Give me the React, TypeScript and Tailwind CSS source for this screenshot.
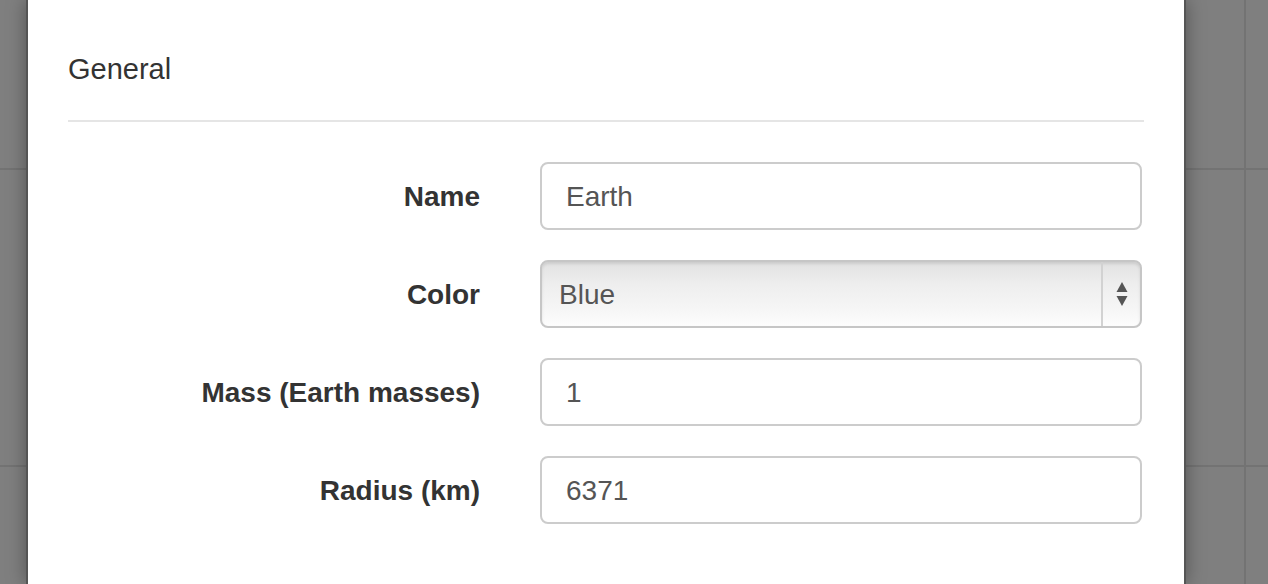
import React from "react";

const fields = [
  { label: "Name", value: "Earth" },
  { label: "Color", value: "Blue", select: true },
  { label: "Mass (Earth masses)", value: "1" },
  { label: "Radius (km)", value: "6371" },
];

const GridRows = () => (
  <div className="flex flex-col">
    <div className="h-[170px] border-b-2 border-[#737373]" />
    <div className="h-[297px] border-b-2 border-[#737373]" />
  </div>
);

const SelectBox = ({ value }: { value: string }) => (
  <div className="flex h-[68px] items-stretch rounded-[8px] border-2 border-[#c6c6c6] bg-[linear-gradient(to_bottom,#e2e2e2,#eeeeee_35%,#f6f6f6_75%,#fdfdfd)] shadow-[inset_0_2px_3px_rgba(0,0,0,0.1)]">
    <div className="flex flex-1 items-center pl-[17px] pt-[2px] text-[28px] text-[#555]">
      {value}
    </div>
    <div className="w-[2px] bg-[#d2d2d2]" />
    <div className="flex w-[37px] items-center justify-center">
      <svg width="12" height="26" viewBox="0 0 12 26">
        <polygon points="6,1 11.5,11 0.5,11" fill="#555" />
        <polygon points="0.5,15 11.5,15 6,25" fill="#555" />
      </svg>
    </div>
  </div>
);

export default function App() {
  return (
    <div className="flex h-[584px] w-full overflow-hidden bg-[#7f7f7f] font-['Liberation_Sans',Arial,sans-serif]">
      <div className="w-[26px] shrink-0">
        <GridRows />
      </div>

      <div className="relative z-10 w-[1160px] shrink-0 border-x-2 border-[#555] bg-white px-[40px] shadow-[0_0_18px_rgba(0,0,0,0.35)]">
        <div className="border-b-2 border-[#e5e5e5] pb-[31px] pt-[49px] text-[29px] leading-[40px] text-[#333]">
          General
        </div>

        <div className="grid grid-cols-[412px_602px] items-center gap-x-[60px] gap-y-[30px] pt-[40px]">
          {fields.map((f) => (
            <React.Fragment key={f.label}>
              <label className="pt-[2px] text-right text-[28px] font-bold text-[#333]">
                {f.label}
              </label>
              {f.select ? (
                <SelectBox value={f.value} />
              ) : (
                <input
                  readOnly
                  defaultValue={f.value}
                  className="h-[68px] w-full rounded-[8px] border-2 border-[#ccc] bg-white px-[24px] pt-[2px] text-[28px] text-[#555] outline-none"
                />
              )}
            </React.Fragment>
          ))}
        </div>
      </div>

      <div className="flex flex-1">
        <div className="w-[58px] shrink-0">
          <GridRows />
        </div>
        <div className="w-[2px] shrink-0 bg-[#737373]" />
        <div className="flex-1">
          <GridRows />
        </div>
      </div>
    </div>
  );
}
